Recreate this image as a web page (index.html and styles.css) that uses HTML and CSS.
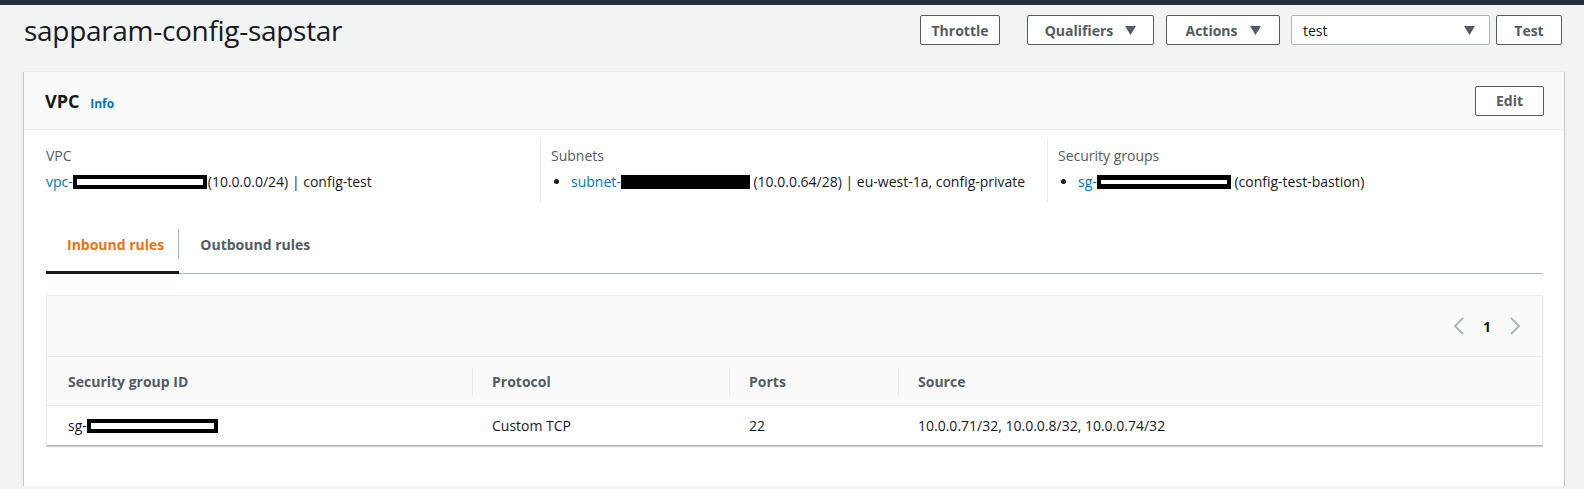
FILE: index.html
```html
<!DOCTYPE html>
<html lang="en">
<head>
    <meta charset="UTF-8">
    <meta name="viewport" content="width=device-width, initial-scale=1.0">
    <title>sapparam-config-sapstar</title>
    <link rel="stylesheet" href="styles.css">
</head>
<body>

<div class="topbar"></div>

<div class="page-head">
    <h1>sapparam-config-sapstar</h1>
    <div class="actions">
        <button class="btn btn-throttle">Throttle</button>
        <button class="btn btn-qual">Qualifiers <svg class="caret" width="11" height="9" viewBox="0 0 11 9"><polygon points="0,0 11,0 5.5,9" fill="#545b64"/></svg></button>
        <button class="btn btn-actions">Actions <svg class="caret" width="11" height="9" viewBox="0 0 11 9"><polygon points="0,0 11,0 5.5,9" fill="#545b64"/></svg></button>
        <div class="select">test <svg width="11" height="9" viewBox="0 0 11 9"><polygon points="0,0 11,0 5.5,9" fill="#545b64"/></svg></div>
        <button class="btn btn-test">Test</button>
    </div>
</div>

<div class="card">
    <div class="card-head">
        <h2>VPC <a href="#" class="info">Info</a></h2>
        <button class="btn btn-edit">Edit</button>
    </div>

    <div class="card-body">
        <div class="cols">
            <div class="col">
                <div class="label">VPC</div>
                <div class="value"><a href="#">vpc-</a><span class="redact redact-vpc"></span>(10.0.0.0/24) | config-test</div>
            </div>
            <div class="col">
                <div class="label">Subnets</div>
                <ul class="value">
                    <li><a href="#">subnet-</a><span class="redact redact-solid redact-subnet"></span> (10.0.0.64/28) | eu-west-1a, config-private</li>
                </ul>
            </div>
            <div class="col">
                <div class="label">Security groups</div>
                <ul class="value">
                    <li><a href="#">sg-</a><span class="redact redact-thin redact-sg"></span> (config-test-bastion)</li>
                </ul>
            </div>
        </div>

        <div class="tabs">
            <div class="tab active">Inbound rules</div>
            <div class="tab">Outbound rules</div>
        </div>

        <div class="table-box">
            <div class="table-tools">
                <div class="pager">
                    <svg width="14" height="20" viewBox="0 0 14 20"><polyline points="11,2 3,10 11,18" fill="none" stroke="#aab7b8" stroke-width="2"/></svg>
                    <span class="page">1</span>
                    <svg width="14" height="20" viewBox="0 0 14 20"><polyline points="3,2 11,10 3,18" fill="none" stroke="#aab7b8" stroke-width="2"/></svg>
                </div>
            </div>
            <table>
                <thead>
                    <tr>
                        <th class="c-id">Security group ID</th>
                        <th class="c-proto">Protocol</th>
                        <th class="c-ports">Ports</th>
                        <th>Source</th>
                    </tr>
                </thead>
                <tbody>
                    <tr>
                        <td>sg-<span class="redact redact-row"></span></td>
                        <td>Custom TCP</td>
                        <td>22</td>
                        <td>10.0.0.71/32, 10.0.0.8/32, 10.0.0.74/32</td>
                    </tr>
                </tbody>
            </table>
        </div>
    </div>
</div>

</body>
</html>
```

FILE: styles.css
```css
body {
    margin: 0;
    background: #f2f3f3;
    font-family: "Open Sans", "Noto Sans", sans-serif;
    font-size: 14px;
    color: #16191f;
}
a {
    color: #0073bb;
    text-decoration: none;
}
.topbar {
    height: 5px;
    background: #232f3e;
}
.page-head {
    display: flex;
    align-items: center;
    justify-content: space-between;
    height: 50px;
    padding: 0 22px 0 24px;
    margin-bottom: 16px;
}
.page-head h1 {
    margin: 0;
    font-size: 28px;
    font-weight: 400;
    letter-spacing: -0.3px;
}
.actions {
    display: flex;
    align-items: center;
}
.btn {
    display: inline-flex;
    align-items: center;
    justify-content: center;
    box-sizing: border-box;
    height: 30px;
    padding: 0;
    background: #fff;
    border: 1px solid #545b64;
    border-radius: 2px;
    color: #545b64;
    font-family: inherit;
    font-size: 14px;
    font-weight: 700;
    white-space: nowrap;
    flex-shrink: 0;
}
.caret {
    margin-left: 12px;
}
.btn-throttle { width: 80px; margin-right: 27px; }
.btn-qual { width: 127px; margin-right: 12px; }
.btn-actions { width: 114px; margin-right: 11px; }
.btn-test { width: 66px; margin-left: 6px; }
.select {
    display: flex;
    align-items: center;
    justify-content: space-between;
    box-sizing: border-box;
    width: 199px;
    height: 30px;
    padding: 0 14px 0 11px;
    background: #fff;
    border: 1px solid #aab7b8;
    border-radius: 2px;
}
.card {
    margin: 0 20px 0 24px;
    background: #fff;
    box-shadow: 0 1px 1px 0 rgba(0, 28, 36, 0.3), 1px 1px 1px 0 rgba(0, 28, 36, 0.15), -1px 1px 1px 0 rgba(0, 28, 36, 0.15);
    border-top: 1px solid #eaeded;
}
.card-head {
    display: flex;
    align-items: center;
    justify-content: space-between;
    height: 57px;
    padding: 0 20px 0 21px;
    background: #fafafa;
    border-bottom: 1px solid #eaeded;
}
.card-head h2 {
    margin: 0;
    font-size: 18px;
    font-weight: 700;
}
.info {
    margin-left: 6px;
    font-size: 12px;
    font-weight: 700;
}
.btn-edit {
    width: 69px;
}
.card-body {
    padding: 9px 21px 40px 22px;
}
.cols {
    display: grid;
    grid-template-columns: 494px 507px 1fr;
}
.col {
    padding: 6px 0 10px 0;
}
.col + .col {
    border-left: 1px solid #eaeded;
    padding-left: 10px;
}
.label {
    color: #545b64;
    line-height: 22px;
}
.value {
    margin: 4px 0 0 0;
    line-height: 22px;
}
ul.value {
    padding-left: 20px;
}
.redact {
    display: inline-block;
    vertical-align: -2px;
    box-sizing: border-box;
    height: 14px;
    background: #fff;
    border: 4px solid #000;
}
.redact-vpc { width: 134px; margin-right: 1px; }
.redact-solid { background: #000; }
.redact-subnet { width: 129px; }
.redact-thin { border-width: 5px 4px 5px 4px; }
.redact-sg { width: 134px; }
.redact-row { width: 131px; }
.tabs {
    display: flex;
    margin-top: 14px;
    border-bottom: 1px solid #aab7b8;
}
.tab {
    position: relative;
    padding: 18px 15px 0 21px;
    height: 36px;
    color: #545b64;
    font-weight: 700;
    border-bottom: 3px solid transparent;
    margin-bottom: -1px;
}
.tab.active {
    color: #ec7211;
    border-bottom-color: #16191f;
}
.tab.active::after {
    content: "";
    position: absolute;
    right: 0;
    top: 12px;
    height: 30px;
    border-right: 1px solid #aab7b8;
}
.tab + .tab {
    padding-left: 21px;
}
.table-box {
    margin-top: 21px;
    border: 1px solid #eaeded;
    border-bottom: 1px solid #aab7b8;
    box-shadow: 0 1px 1px 0 rgba(0, 28, 36, 0.2);
}
.table-tools {
    display: flex;
    justify-content: flex-end;
    align-items: center;
    height: 60px;
    padding-right: 20px;
    background: #fafafa;
}
.pager {
    display: flex;
    align-items: center;
    gap: 14px;
}
.page {
    font-weight: 700;
    width: 14px;
    text-align: center;
}
table {
    width: 100%;
    border-collapse: collapse;
}
th {
    height: 48px;
    padding: 0 20px;
    background: #fafafa;
    border-top: 1px solid #eaeded;
    color: #545b64;
    font-weight: 700;
    text-align: left;
    position: relative;
}
th + th::before {
    content: "";
    position: absolute;
    left: 0;
    top: 11px;
    height: 28px;
    border-left: 1px solid #eaeded;
}
th:first-child,
td:first-child {
    padding-left: 21px;
}
.c-id { width: 384px; }
.c-proto { width: 217px; }
.c-ports { width: 129px; }
td {
    height: 39px;
    padding: 0 20px;
    border-top: 1px solid #eaeded;
}
```
